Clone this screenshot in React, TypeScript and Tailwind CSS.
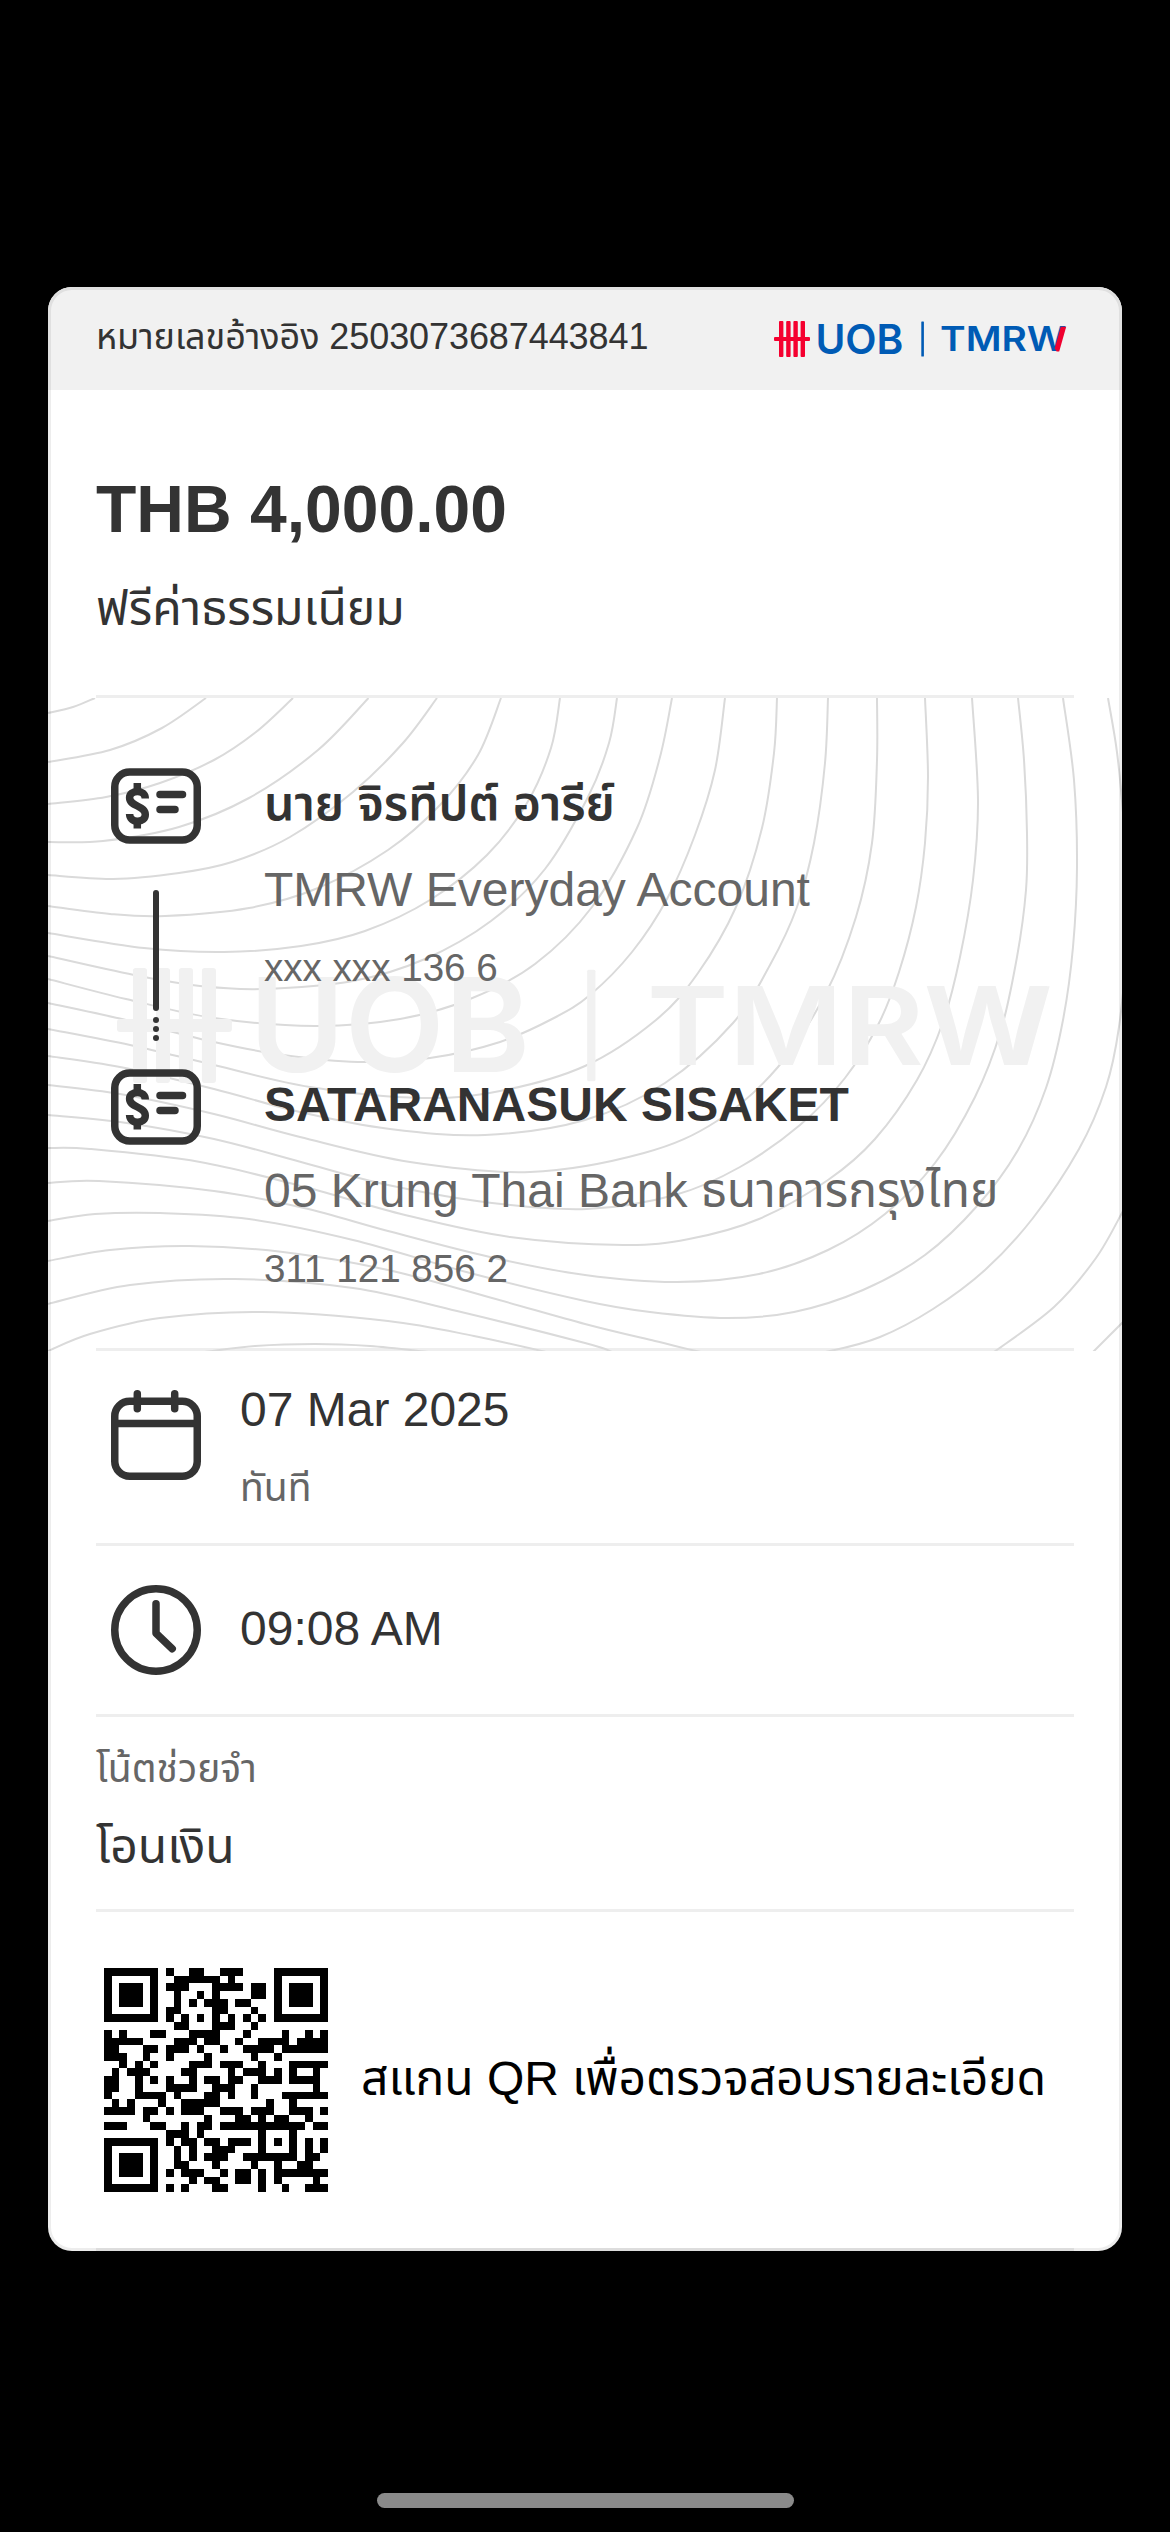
import type { ReactNode } from "react";

type Point = [number, number];

const CONTOURS: Point[][] = [
  [[48, 713], [73, 707], [95, 698]],
  [[48, 762], [110, 750], [162, 728], [206, 698]],
  [[48, 804], [106, 797], [160, 783], [214, 760], [256, 732], [293, 698]],
  [[48, 842], [103, 841], [179, 827], [249, 798], [318, 750], [368.5, 698]],
  [[48, 875], [113, 879], [179, 873], [232, 862], [290, 837], [353, 792], [403, 743], [437, 698]],
  [[48, 906], [110, 914], [165, 916], [249, 908], [318, 888], [388, 850], [440, 805], [478, 755], [501, 698]],
  [[48, 933], [144, 948], [224, 952], [301, 946], [365, 931], [430, 900], [487, 855], [527, 803], [551, 748], [560, 698]],
  [[48, 956], [134, 975], [200, 986], [262, 989], [353, 981], [425, 959], [491, 921], [545, 869], [588, 797], [609, 743], [617, 698]],
  [[48, 979], [126, 999], [214, 1018], [315, 1026], [400, 1019], [470, 999], [535, 964], [592, 907], [637, 828], [660, 757], [672, 698]],
  [[48, 1003], [126, 1020], [214, 1042], [283, 1055], [358, 1062], [430, 1058], [500, 1042], [554, 1018], [590, 995], [632, 952], [667, 899], [695, 835], [715, 770], [725, 698]],
  [[48, 1029], [130, 1045], [214, 1065], [310, 1087], [422, 1098], [500, 1091], [585, 1066], [656, 1020], [698, 973], [736, 907], [762, 828], [774, 753], [777, 698]],
  [[48, 1056], [120, 1067], [214, 1089], [300, 1112], [390, 1129], [485, 1135], [585, 1120], [665, 1083], [733, 1023], [770, 965], [797, 907], [814, 843], [825, 763], [828, 698]],
  [[48, 1085], [120, 1094], [214, 1114], [300, 1137], [410, 1162], [530, 1172], [644, 1153], [717, 1121], [778, 1067], [826, 993], [856, 917], [872, 843], [877, 760], [877, 698]],
  [[48, 1115], [120, 1122], [214, 1139], [301, 1162], [388, 1185], [492, 1203], [587, 1209], [675, 1195], [740, 1167], [800, 1125], [845, 1078], [879, 1023], [899, 972], [916, 907], [925, 843], [928, 777], [925, 698]],
  [[48, 1148], [90, 1149], [200, 1162], [305, 1187], [405, 1215], [510, 1237], [623, 1245], [689, 1239], [759, 1219], [828, 1180], [875, 1139], [917, 1080], [943, 1022], [960, 957], [973, 880], [978, 800], [972, 698]],
  [[48, 1183], [99, 1181], [214, 1191], [304, 1208], [388, 1231], [490, 1257], [585, 1275], [677, 1282], [759, 1274], [828, 1250], [885, 1214], [935, 1163], [975, 1097], [1001, 1030], [1017, 957], [1026, 890], [1027, 833], [1024, 760], [1018, 698]],
  [[48, 1221], [95, 1214], [160, 1213], [249, 1219], [353, 1240], [470, 1273], [585, 1301], [650, 1312], [727, 1318], [794, 1312], [863, 1290], [925, 1255], [978, 1205], [1018, 1150], [1046, 1088], [1063, 1020], [1073, 947], [1077, 867], [1074, 780], [1063, 698]],
  [[48, 1261], [110, 1250], [189, 1246], [283, 1252], [388, 1270], [492, 1298], [585, 1324], [655, 1341], [717, 1355], [775, 1359], [830, 1351], [880, 1337], [933, 1309], [985, 1270], [1033, 1218], [1079, 1149], [1106, 1087], [1119, 1027], [1126, 950], [1127, 870], [1121, 790], [1116, 745], [1108, 698]],
  [[48, 1304], [130, 1285], [235, 1279], [353, 1288], [457, 1311], [585, 1343], [612, 1352]],
  [[994, 1352], [1054, 1307], [1096, 1258], [1123, 1211]],
  [[48, 1351], [90, 1334], [160, 1318], [262, 1312], [388, 1321], [474, 1336], [546, 1352]],
  [[1093, 1352], [1123, 1322]],
  [[205, 1352], [255, 1346], [315, 1344], [370, 1346], [428, 1352]],
];

function smoothPath(points: Point[]): string {
  let d = `M${points[0][0]} ${points[0][1]}`;
  for (let i = 0; i < points.length - 1; i++) {
    const a = points[Math.max(i - 1, 0)];
    const b = points[i];
    const c = points[i + 1];
    const e = points[Math.min(i + 2, points.length - 1)];
    const x1 = b[0] + (c[0] - a[0]) / 6;
    const y1 = b[1] + (c[1] - a[1]) / 6;
    const x2 = c[0] - (e[0] - b[0]) / 6;
    const y2 = c[1] - (e[1] - b[1]) / 6;
    d += `C${x1.toFixed(1)} ${y1.toFixed(1)} ${x2.toFixed(1)} ${y2.toFixed(1)} ${c[0]} ${c[1]}`;
  }
  return d;
}

function ContourLines() {
  return (
    <svg className="absolute left-0 top-0 h-[653px] w-[1074px]" viewBox="48 698 1074 653" fill="none" stroke="#dadada" strokeWidth="2">
      {CONTOURS.map((points, i) => (
        <path key={i} d={smoothPath(points)} />
      ))}
    </svg>
  );
}

function Logo({ className, mark, word, accent }: { className: string; mark: string; word: string; accent: string }) {
  return (
    <svg className={className} viewBox="774 321 292 36" overflow="visible">
      <g fill={mark}>
        <rect x="779" y="321" width="4.4" height="36" rx="0.9" />
        <rect x="786.2" y="321" width="4.4" height="36" rx="0.9" />
        <rect x="793.4" y="321" width="4.4" height="36" rx="0.9" />
        <rect x="800.6" y="321" width="4.4" height="36" rx="0.9" />
        <rect x="774" y="337" width="36" height="4" rx="1" />
      </g>
      <g fill={word} fontFamily="Inter, sans-serif">
        <text x="815.4" y="353.7" fontSize="41" fontWeight="600" textLength="88" lengthAdjust="spacingAndGlyphs">UOB</text>
        <rect x="921.3" y="321.5" width="2.6" height="35" rx="0.5" />
        <text x="940" y="351.4" fontSize="34" fontWeight="600" textLength="126.4" lengthAdjust="spacingAndGlyphs">TMRW</text>
      </g>
      <path d="M1060.8 326.7h5.4l-7 24.7h-2.6l-1.8-3.2z" fill={accent} />
    </svg>
  );
}

function AccountIcon() {
  return (
    <svg className="block h-[76px] w-[90px]" viewBox="0 0 90 76" fill="none" stroke="#333" strokeWidth="7.5">
      <rect x="3.75" y="4" width="82.5" height="68" rx="15" />
      <path d="M26.3 15v8M26.3 53v7.5" />
      <path d="M34.3 30.6C34.3 26 31 23.4 26.4 23.4S18.6 26 18.6 29.8C18.6 38.6 34.3 37.4 34.3 46.4C34.3 50.6 31 53.2 26.4 53.2S18.6 50.4 18.6 46" />
      <path d="M49 26.5h22.5M49 41.5h15" strokeLinecap="round" />
    </svg>
  );
}

function Connector() {
  return (
    <svg className="mx-auto mt-[46px] block h-[151px] w-[6px]" viewBox="0 0 6 151" fill="#333">
      <rect width="6" height="121" rx="3" />
      <circle cx="3" cy="130" r="3" />
      <circle cx="3" cy="139" r="3" />
      <circle cx="3" cy="148" r="3" />
    </svg>
  );
}

function CalendarIcon() {
  return (
    <svg className="block size-[90px]" viewBox="0 0 90 90" fill="none" stroke="#333" strokeWidth="7.5">
      <rect x="3.75" y="11.25" width="82.5" height="75" rx="15" />
      <path d="M4 33.5h82" />
      <path d="M26.3 3.75v15M63.7 3.75v15" strokeLinecap="round" />
    </svg>
  );
}

function ClockIcon() {
  return (
    <svg className="block size-[90px]" viewBox="0 0 90 90" fill="none" stroke="#333" strokeWidth="7.5" strokeLinecap="round" strokeLinejoin="round">
      <circle cx="45" cy="45" r="41.25" />
      <path d="M45 18.75V48.3l16.2 15.4" />
    </svg>
  );
}

const QR_ROWS: number[][] = [
  [8, 11, 12, 15, 16, 17],
  [9, 10, 11, 12, 13, 14, 16],
  [8, 9, 10, 14, 15, 16, 17, 19, 20],
  [9, 12, 14, 19, 20],
  [9, 11, 13, 14, 15, 17, 18],
  [8, 9, 14, 15, 19],
  [8, 10, 12, 14, 16, 18, 20],
  [9, 10, 14, 15, 16, 19],
  [0, 2, 6, 7, 11, 12, 13, 14, 18, 23, 26, 28],
  [0, 1, 2, 3, 4, 9, 10, 11, 13, 14, 17, 20, 21, 22, 23, 25, 26, 27, 28],
  [0, 1, 5, 6, 8, 9, 10, 12, 15, 18, 19, 20, 21, 23, 24, 25, 26, 27, 28],
  [0, 1, 2, 5, 8, 13, 19, 22],
  [2, 4, 6, 11, 12, 13, 15, 16, 17, 20, 24, 25, 26, 27, 28],
  [1, 3, 4, 5, 10, 11, 16, 18, 19, 20, 22, 24, 27],
  [0, 1, 4, 6, 8, 11, 13, 14, 16, 17, 20, 21, 22, 24, 25, 26, 27],
  [0, 1, 4, 8, 9, 10, 11, 14, 15, 16, 19, 27],
  [0, 4, 5, 6, 7, 9, 13, 14, 16, 19, 23, 24, 25, 26, 27, 28],
  [1, 3, 7, 10, 11, 12, 13, 14, 21, 24],
  [0, 1, 2, 3, 5, 6, 8, 10, 11, 12, 15, 16, 17, 19, 20, 21, 24, 25, 26, 28],
  [5, 13, 17, 18, 20, 22, 23, 26],
  [0, 1, 2, 6, 7, 10, 12, 13, 15, 16, 17, 18, 19, 20, 21, 22, 23, 24, 25, 27, 28],
  [8, 9, 10, 12, 20, 24],
  [8, 10, 11, 13, 14, 16, 17, 18, 20, 22, 24, 26, 28],
  [9, 11, 14, 15, 16, 20, 24, 26, 28],
  [9, 11, 13, 14, 15, 18, 19, 20, 21, 22, 23, 24, 26, 27],
  [9, 10, 14, 19, 22, 25, 26],
  [8, 10, 11, 12, 15, 17, 18, 20, 22, 23, 24, 25, 26, 27, 28],
  [11, 13, 14, 17, 18, 20, 22, 27],
  [8, 10, 14, 15, 20, 23, 26, 27, 28],
];

const FINDERS: Point[] = [[0, 0], [22, 0], [0, 22]];

function QrCode() {
  return (
    <svg className="size-[224px] shrink-0" viewBox="0 0 29 29" shapeRendering="crispEdges">
      <path d={QR_ROWS.map((cols, y) => cols.map((x) => `M${x} ${y}h1v1h-1z`).join("")).join("")} />
      {FINDERS.map(([x, y]) => (
        <path key={`${x}-${y}`} fillRule="evenodd" d={`M${x} ${y}h7v7h-7zm1 1v5h5v-5zm1 1h3v3h-3z`} />
      ))}
    </svg>
  );
}

function Divider() {
  return <div className="mx-12 h-[3px] shrink-0 bg-[#eeeeee]" />;
}

function Party({ name, bank, account }: { name: string; bank: string; account: string }) {
  return (
    <div className="h-[301px]">
      <div className="h-[72px] text-[48px] font-semibold leading-[72px] text-[#333]">{name}</div>
      <div className="mt-[14px] h-[72px] text-[48px] leading-[72px] text-[#666]">{bank}</div>
      <div className="mt-[12px] h-[60px] text-[38.6px] leading-[60px] text-[#666]">{account}</div>
    </div>
  );
}

function DetailRow({ className, icon, children }: { className: string; icon: ReactNode; children: ReactNode }) {
  return (
    <div className={`flex gap-[39px] pl-[63px] ${className}`}>
      {icon}
      <div>{children}</div>
    </div>
  );
}

export default function App() {
  return (
    <div className="flex h-[2532px] w-[1170px] flex-col items-center overflow-hidden bg-black pt-[287px] font-['Liberation_Sans','Noto_Sans_Thai',sans-serif] text-[#333]">
      <main className="relative flex h-[1964px] w-[1074px] shrink-0 flex-col overflow-hidden whitespace-nowrap rounded-[24px] bg-white">
        <header className="flex h-[103px] shrink-0 items-center justify-between bg-[#f1f1f1] pl-12 pr-[56px]">
          <div className="-mt-1 h-12 text-[36px] leading-[48px] tracking-[-0.08px]">หมายเลขอ้างอิง 2503073687443841</div>
          <Logo className="h-[36px] w-[292px]" mark="#f5002f" word="#005bb5" accent="#f0002f" />
        </header>

        <section className="h-[305px] shrink-0 px-12 pt-[79px]">
          <h1 className="h-20 text-[66px] font-bold leading-[80px]">THB 4,000.00</h1>
          <p className="mt-[24px] h-[72px] text-[48px] leading-[72px]">ฟรีค่าธรรมเนียม</p>
        </section>
        <Divider />

        <section className="relative h-[650px] shrink-0">
          <ContourLines />
          <Logo className="absolute left-[69px] top-[270px] h-[115px] w-[932px]" mark="#f1f1f1" word="#f1f1f1" accent="#f1f1f1" />
          <div className="relative flex gap-[63px] pl-[63px] pt-[70px]">
            <div className="w-[90px]">
              <AccountIcon />
              <Connector />
              <div className="mt-[28px]">
                <AccountIcon />
              </div>
            </div>
            <div>
              <Party name="นาย จิรทีปต์ อารีย์" bank="TMRW Everyday Account" account="xxx xxx 136 6" />
              <Party name="SATARANASUK SISAKET" bank="05 Krung Thai Bank ธนาคารกรุงไทย" account="311 121 856 2" />
            </div>
          </div>
        </section>
        <Divider />

        <DetailRow className="h-[192px] shrink-0 pt-[39px]" icon={<CalendarIcon />}>
          <div className="-mt-[16px] h-[72px] text-[48px] leading-[72px]">07 Mar 2025</div>
          <div className="mt-[12px] h-[60px] text-[39px] leading-[60px] text-[#666]">ทันที</div>
        </DetailRow>
        <Divider />

        <DetailRow className="h-[168px] shrink-0 items-center" icon={<ClockIcon />}>
          <div className="-mt-[3px] h-[72px] text-[48px] leading-[72px]">09:08 AM</div>
        </DetailRow>
        <Divider />

        <section className="h-[192px] shrink-0 px-12 pt-[22px]">
          <div className="h-[60px] text-[39px] leading-[60px] text-[#666]">โน้ตช่วยจำ</div>
          <div className="mt-[12px] h-[72px] text-[48px] leading-[72px]">โอนเงิน</div>
        </section>
        <Divider />

        <section className="flex h-[336px] shrink-0 items-center gap-[33px] pl-[56px] text-black">
          <QrCode />
          <div className="-mt-[3px] h-[72px] text-[48px] leading-[72px] tracking-[-0.08px]">สแกน QR เพื่อตรวจสอบรายละเอียด</div>
        </section>
        <Divider />

        <div className="pointer-events-none absolute inset-0 rounded-[24px] border-[3px] border-black/7" />
      </main>
      <div className="mt-[242px] h-[15px] w-[417px] shrink-0 rounded-full bg-[#8a8a8a]" />
    </div>
  );
}
